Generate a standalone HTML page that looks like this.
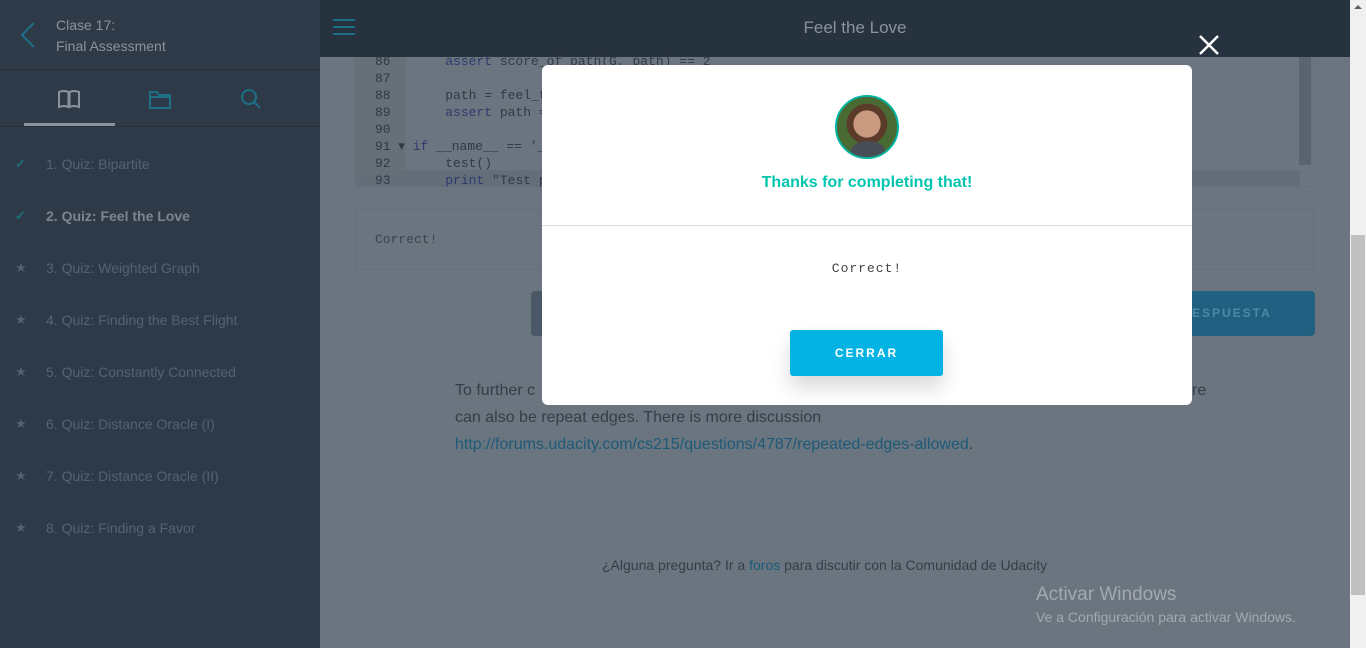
<!DOCTYPE html>
<html><head><meta charset="utf-8"><style>
*{margin:0;padding:0;box-sizing:border-box}
body{width:1366px;height:648px;overflow:hidden;position:relative;background:#6b757f;font-family:"Liberation Sans",sans-serif}
.sb{position:absolute;left:0;top:0;width:320px;height:648px;background:#2e3a48}
.sbh{height:70px;border-bottom:1px solid #26313d;position:relative}
.sbh .t{position:absolute;left:56px;top:15px;color:#8a939c;font-size:14px;line-height:21px}
.tabs{height:57px;border-bottom:1px solid #26313d;position:relative}
.li{position:absolute;left:46px;font-size:14px;color:#566270}
.ic{position:absolute;left:15px;font-size:13px;color:#566270}
.top{position:absolute;left:320px;top:0;width:1030px;height:57px;background:#27323f}
.mono{font-family:"Liberation Mono",monospace;font-size:13px}
.scroll{position:absolute;left:1350px;top:0;width:16px;height:648px;background:#f0f0f0}
.modal{position:absolute;left:542px;top:65px;width:650px;height:340px;background:#fff;border-radius:6px}
</style></head><body>
<div class="sb">
 <div class="sbh">
  <svg style="position:absolute;left:18px;top:20px" width="20" height="30"><path d="M16 3 L4 15 L16 27" stroke="#1d6f86" stroke-width="2" fill="none"/></svg>
  <div class="t">Clase 17:<br>Final Assessment</div>
 </div>
 <div class="tabs">
  <svg style="position:absolute;left:57px;top:19px" width="24" height="20" viewBox="0 0 24 20"><path d="M2 3 Q7 1 11.5 3 V18 Q7 16 2 18Z M12.5 3 Q17 1 22 3 V18 Q17 16 12.5 18Z" stroke="#8a939c" stroke-width="2" fill="none"/></svg>
  <div style="position:absolute;left:24px;top:53px;width:91px;height:3px;background:#8a939c"></div>
  <svg style="position:absolute;left:149px;top:19px" width="22" height="20"><path d="M1 3 H8 L10 6 H21 V19 H1Z M1 8 H21" stroke="#1d6f86" stroke-width="2" fill="none"/></svg>
  <svg style="position:absolute;left:240px;top:18px" width="22" height="22"><circle cx="9" cy="9" r="7" stroke="#1d6f86" stroke-width="2" fill="none"/><path d="M14 14 L20 20" stroke="#1d6f86" stroke-width="2"/></svg>
 </div>
 <div class="ic" style="top:156px;color:#1d6f78;font-weight:bold">✓</div><div class="li" style="top:156px">1. Quiz: Bipartite</div>
 <div class="ic" style="top:208px;color:#1d6f78;font-weight:bold">✓</div><div class="li" style="top:208px;color:#7b858f;font-weight:bold">2. Quiz: Feel the Love</div>
 <div class="ic" style="top:260px">★</div><div class="li" style="top:260px">3. Quiz: Weighted Graph</div>
 <div class="ic" style="top:312px">★</div><div class="li" style="top:312px">4. Quiz: Finding the Best Flight</div>
 <div class="ic" style="top:364px">★</div><div class="li" style="top:364px">5. Quiz: Constantly Connected</div>
 <div class="ic" style="top:416px">★</div><div class="li" style="top:416px">6. Quiz: Distance Oracle (I)</div>
 <div class="ic" style="top:468px">★</div><div class="li" style="top:468px">7. Quiz: Distance Oracle (II)</div>
 <div class="ic" style="top:520px">★</div><div class="li" style="top:520px">8. Quiz: Finding a Favor</div>
</div>
<div class="top">
 <svg style="position:absolute;left:13px;top:18px" width="22" height="18"><path d="M0 2H22M0 9H22M0 16H22" stroke="#1d6f86" stroke-width="2"/></svg>
 <div style="position:absolute;left:0;width:1070px;top:18px;text-align:center;color:#8a939c;font-size:17px">Feel the Love</div>
</div>
<div style="position:absolute;left:355px;top:57px;width:960px;height:130px;background:#6b757f;border:1px solid #66707a;border-top:none"></div>
<div style="position:absolute;left:355px;top:57px;width:50px;height:130px;background:#667079"></div>
<div style="position:absolute;left:355px;top:170px;width:945px;height:17px;background:#646e78"></div>
<div style="position:absolute;left:1299px;top:57px;width:12px;height:108px;background:#5a646e"></div>
<div class="mono" style="position:absolute;left:375px;top:53px;line-height:17px;color:#2f3a45;white-space:pre">86       <span style="color:#2e3a6e">assert</span> score_of_path(G, path) == 2
87
88       path = feel_th
89       <span style="color:#2e3a6e">assert</span> path ==
90
91 ▾ <span style="color:#2e3a6e">if</span> __name__ == '_
92       test()
93       <span style="color:#2e3a6e">print</span> "Test pa</div>
<div style="position:absolute;left:355px;top:209px;width:959px;height:61px;border:1px solid #66707a"></div>
<div class="mono" style="position:absolute;left:375px;top:232px;color:#3a444f">Correct!</div>
<div style="position:absolute;left:531px;top:291px;width:40px;height:45px;background:#4a5868;border-radius:4px"></div>
<div style="position:absolute;left:1160px;top:291px;width:155px;height:45px;background:#216080;border-radius:4px;color:#4a8aa8;font-size:12px;font-weight:bold;letter-spacing:2px;padding:15px 0 0 32px">ESPUESTA</div>
<div style="position:absolute;left:455px;top:377px;font-size:16px;line-height:27px;color:#343e48;width:760px">To further c<br>can also be repeat edges. There is more discussion<br><span style="color:#1d5a78">http://forums.udacity.com/cs215/questions/4787/repeated-edges-allowed</span>.</div>
<div style="position:absolute;left:1192px;top:377px;font-size:16px;line-height:27px;color:#343e48">re</div>
<div style="position:absolute;left:602px;top:557px;font-size:14px;color:#343e48">¿Alguna pregunta? Ir a <span style="color:#1d5a78">foros</span> para discutir con la Comunidad de Udacity</div>
<div style="position:absolute;left:1036px;top:584px;font-size:19px;color:#a3a9b0">Activar Windows</div>
<div style="position:absolute;left:1036px;top:609px;font-size:14px;color:#a3a9b0">Ve a Configuración para activar Windows.</div>
<div class="scroll"><div style="position:absolute;left:1px;top:235px;width:14px;height:360px;background:#c0c0c0"></div><div style="position:absolute;left:4px;top:5px;border:4px solid transparent;border-bottom:4px solid #606060;border-top:none"></div></div>
<svg style="position:absolute;left:1198px;top:34px" width="22" height="22"><path d="M2 2L20 20M20 2L2 20" stroke="#fff" stroke-width="2.5"/></svg>
<div class="modal">
 <div style="position:absolute;left:293px;top:30px;width:64px;height:64px;border-radius:50%;border:2px solid #02b3a0;background:radial-gradient(circle at 50% 45%,#c99a7f 0 30%,#5a3a28 31% 45%,#4a6a34 46%);overflow:hidden"><div style="position:absolute;left:14px;top:44px;width:34px;height:20px;background:#474c55;border-radius:50% 50% 0 0"></div></div>
 <div style="position:absolute;left:0;width:650px;top:109px;text-align:center;color:#02c5b0;font-size:16px;font-weight:bold">Thanks for completing that!</div>
 <div style="position:absolute;left:0;top:160px;width:650px;height:1px;background:#dbdee1"></div>
 <div class="mono" style="position:absolute;left:0;width:650px;top:196px;text-align:center;color:#444;letter-spacing:1px">Correct!</div>
 <div style="position:absolute;left:248px;top:265px;width:153px;height:46px;background:#02b3e4;border-radius:3px;box-shadow:0 12px 20px rgba(0,0,0,.15);color:#fff;font-size:12px;font-weight:bold;letter-spacing:2px;text-align:center;line-height:46px">CERRAR</div>
</div>
</body></html>
